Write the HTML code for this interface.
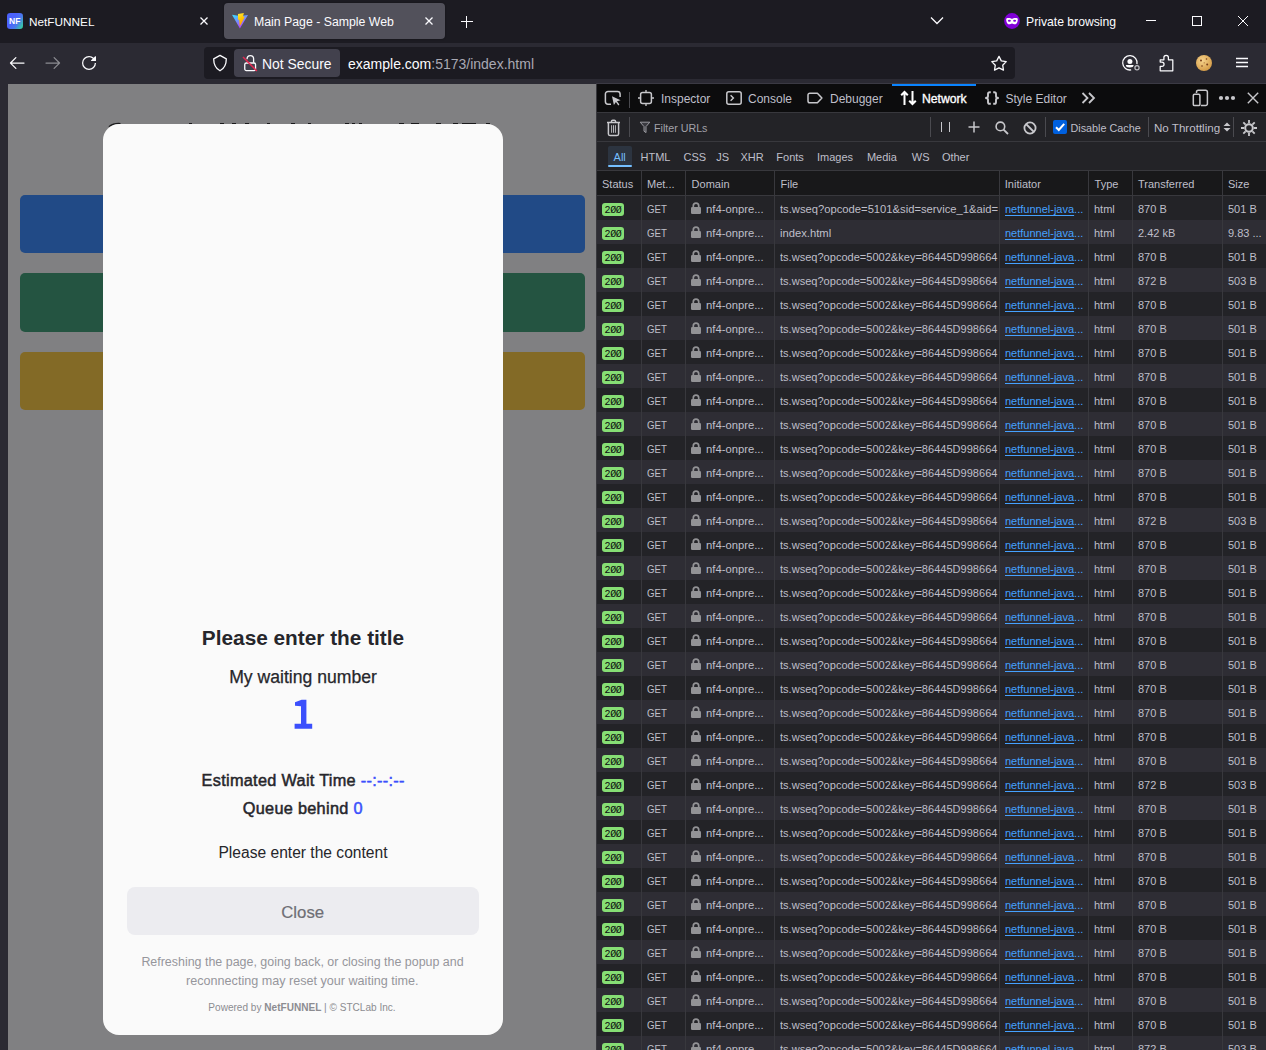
<!DOCTYPE html>
<html><head><meta charset="utf-8">
<style>
*{box-sizing:border-box;margin:0;padding:0}
html,body{width:1266px;height:1050px;overflow:hidden;background:#1c1b22;font-family:"Liberation Sans",sans-serif}
.a{position:absolute}
.t{position:absolute;white-space:nowrap}
svg{display:block}
/* tab bar */
#tabbar{position:absolute;left:0;top:0;width:1266px;height:43px;background:#1c1b22}
.tabsel{position:absolute;left:224px;top:3px;width:221px;height:36px;background:#52515b;border-radius:4px;box-shadow:0 0 2px rgba(0,0,0,.4)}
.ui{position:absolute;color:#fbfbfe;font-size:12px;white-space:nowrap;line-height:14px}
/* nav bar */
#nav{position:absolute;left:0;top:43px;width:1266px;height:41px;background:#2b2a33}
#url{position:absolute;left:204px;top:47px;width:811px;height:32px;background:#1c1b22;border-radius:4px}
#ident{position:absolute;left:234px;top:49px;width:106px;height:28px;background:#42414d;border-radius:4px}
/* page */
#leftbg{position:absolute;left:0;top:84px;width:597px;height:966px;background:#2b2a33}
#page{position:absolute;left:8px;top:84px;width:588px;height:966px;background:#808082;overflow:hidden}
.btn{position:absolute;left:12px;width:565px;height:58px;border-radius:5px}
#modal{position:absolute;left:95px;top:40px;width:400px;height:911px;background:#fafafa;border-radius:16px}
.mt1{position:absolute;left:0;width:400px;text-align:center;white-space:nowrap;color:#2b2b30}
/* devtools */
#dt{position:absolute;left:596px;top:84px;width:670px;height:966px;background:#232327;border-left:1px solid #38383d;overflow:hidden}
#dtabs{position:absolute;left:0;top:0;width:669px;height:29px;background:#0c0c0d;border-bottom:1px solid #38383d}
.dtl{position:absolute;top:7px;font-size:12px;line-height:14px;color:#bfbfc9;white-space:nowrap}
#ftb{position:absolute;left:0;top:29px;width:669px;height:29px;background:#232327;border-bottom:1px solid #38383d}
#rtb{position:absolute;left:0;top:58px;width:669px;height:29px;background:#232327;border-bottom:1px solid #38383d}
.tl{position:absolute;font-size:11px;line-height:13px;color:#bfbfc9;white-space:nowrap}
#hdr{position:absolute;left:0;top:87px;width:669px;height:25px;background:#18181a;border-bottom:1px solid #38383d}
.vl{position:absolute;width:1px;background:#38383d}
.r{position:absolute;left:0;width:669px;height:24px;background:#232327;font-size:11px;color:#bfbfc9;white-space:nowrap}
.r.alt{background:#2e2d34}
.r .c{position:absolute;top:7px;line-height:13px}
.b200{position:absolute;left:5px;top:7px;width:22px;height:13px;background:#86de74;border-radius:3px;color:#0c0c0d;font-family:"Liberation Mono",monospace;font-size:10px;line-height:13px;padding-top:1px;text-align:center;letter-spacing:-0.3px}
.mt{left:50px;transform:scaleX(0.88);transform-origin:0 0}
.lk{position:absolute;left:94px;top:6px}
.dm{left:109px;font-size:11.25px}
.fl{left:183px;font-size:11.05px;width:219px;overflow:hidden}
.ini{left:408px;color:#45a1ff}
.ini u{text-decoration:underline;text-underline-offset:2px}
.ty{left:497px}
.tr{left:541px}
.sz{left:631px}
</style></head>
<body>
<div id="tabbar">
  <!-- tab 1 -->
  <svg class="a" style="left:7px;top:13px" width="16" height="16" viewBox="0 0 16 16"><defs><linearGradient id="nfg" x1="0.35" y1="0.45" x2="1" y2="0.85"><stop offset="0" stop-color="#4b62fb"/><stop offset="0.45" stop-color="#4a78ee"/><stop offset="1" stop-color="#35d0a0"/></linearGradient></defs><rect width="16" height="16" rx="3.2" fill="url(#nfg)"/><text x="2.1" y="11" font-family="Liberation Sans" font-weight="bold" font-size="8.5" fill="#fff">NF</text></svg>
  <div class="ui" style="left:29px;top:15px;font-size:11.8px">NetFUNNEL</div>
  <svg class="a" style="left:200px;top:17px" width="8" height="8" viewBox="0 0 8 8"><path d="M0.5 0.5L7.5 7.5M7.5 0.5L0.5 7.5" stroke="#fbfbfe" stroke-width="1.3"/></svg>
  <!-- tab 2 -->
  <div class="tabsel"></div>
  <svg class="a" style="left:232px;top:13px" width="16" height="16" viewBox="0 0 16 16"><defs><linearGradient id="vg1" x1="0.1" y1="0.1" x2="0.6" y2="1"><stop offset="0" stop-color="#41d1ff"/><stop offset="1" stop-color="#bd34fe"/></linearGradient><linearGradient id="vg2" x1="0.3" y1="0" x2="0.6" y2="1"><stop offset="0" stop-color="#ffe62e"/><stop offset="0.5" stop-color="#ffc000"/><stop offset="1" stop-color="#ff9a1a"/></linearGradient></defs><path d="M0 1.7L8 2.9L16 1.9L7.9 15.6Z" fill="url(#vg1)"/><path d="M6 1L11.9 0.1L11 3.3L12.7 4.1L8.4 12.6L7.6 12.2L7.4 8.7L7.2 6.8L6 6.8Z" fill="url(#vg2)"/></svg>
  <div class="ui" style="left:254px;top:15px;font-size:12.3px">Main Page - Sample Web</div>
  <svg class="a" style="left:425px;top:17px" width="8" height="8" viewBox="0 0 8 8"><path d="M0.5 0.5L7.5 7.5M7.5 0.5L0.5 7.5" stroke="#fbfbfe" stroke-width="1.3"/></svg>
  <div class="a" style="left:466px;top:16px;width:1.2px;height:12px;background:#fbfbfe"></div><div class="a" style="left:461px;top:21px;width:12px;height:1.2px;background:#fbfbfe"></div>
  <!-- right -->
  <svg class="a" style="left:930px;top:16px" width="14" height="9" viewBox="0 0 14 9"><path d="M1 1.5L7 7.5L13 1.5" fill="none" stroke="#fbfbfe" stroke-width="1.3"/></svg>
  <svg class="a" style="left:1004px;top:12.8px" width="16" height="16" viewBox="0 0 16 16"><circle cx="8" cy="8" r="7.9" fill="#8000d7"/><path d="M2.2 6.2C2.2 5.3 3 5 4.5 5C6 5 7 5.4 8 5.9C9 5.4 10 5 11.5 5C13 5 13.8 5.3 13.8 6.2C13.8 8.5 13 11.2 11 11.2C9.6 11.2 9 10.4 8 10.4C7 10.4 6.4 11.2 5 11.2C3 11.2 2.2 8.5 2.2 6.2Z" fill="#fff"/><ellipse cx="5.4" cy="7.8" rx="1.5" ry="1.05" fill="#8000d7"/><ellipse cx="10.6" cy="7.8" rx="1.5" ry="1.05" fill="#8000d7"/></svg>
  <div class="ui" style="left:1026px;top:14.8px;font-size:12.2px">Private browsing</div>
  <div class="a" style="left:1146px;top:20px;width:10px;height:1px;background:#fbfbfe"></div>
  <div class="a" style="left:1192px;top:16px;width:10px;height:10px;border:1px solid #fbfbfe"></div>
  <svg class="a" style="left:1238px;top:16px" width="10" height="10" viewBox="0 0 10 10"><path d="M0 0L10 10M10 0L0 10" stroke="#fbfbfe" stroke-width="1"/></svg>
</div>

<div id="nav">
</div>
<svg class="a" style="left:9px;top:55px" width="16" height="16" viewBox="0 0 16 16"><path d="M15 7.375H2.976l4.337-4.337a.625.625 0 1 0-.884-.884l-5.4 5.4a.626.626 0 0 0 0 .884l5.4 5.4a.625.625 0 1 0 .884-.884L2.976 8.625H15a.625.625 0 1 0 0-1.25z" fill="#fbfbfe"/></svg>
<svg class="a" style="left:45px;top:55px" width="16" height="16" viewBox="0 0 16 16"><path d="M1 7.375h12.024L8.687 3.038a.625.625 0 1 1 .884-.884l5.4 5.4a.626.626 0 0 1 0 .884l-5.4 5.4a.625.625 0 1 1-.884-.884l4.337-4.329H1a.625.625 0 1 1 0-1.25z" fill="#8c8c92"/></svg>
<svg class="a" style="left:81px;top:55px" width="16" height="16" viewBox="0 0 16 16"><path d="M10.707 6H14.5A.5.5 0 0 0 15 5.5V1.707a.5.5 0 0 0-.854-.354L12.78 2.72A6.972 6.972 0 0 0 8 1a7 7 0 1 0 7 7h-1.25A5.75 5.75 0 1 1 8 2.25c1.437 0 2.731.539 3.742 1.396l-1.389 1.389A.5.5 0 0 0 10.707 6z" fill="#fbfbfe"/></svg>
<div id="url"></div>
<svg class="a" style="left:212px;top:54px" width="16" height="18" viewBox="0 0 16 18"><path d="M8 1.4L14.3 4.9C14.3 10 12 14.5 8 16.8C4 14.5 1.7 10 1.7 4.9Z" fill="none" stroke="#fbfbfe" stroke-width="1.3" stroke-linejoin="round"/></svg>
<div id="ident"></div>
<svg class="a" style="left:242px;top:54px" width="16" height="18" viewBox="0 0 16 18"><path d="M5.1 5.2V4.8A3.25 3.25 0 0 1 11.6 4.8V8.8" fill="none" stroke="#fbfbfe" stroke-width="1.3"/><rect x="2.75" y="9" width="10.8" height="7.6" rx="1.6" fill="none" stroke="#fbfbfe" stroke-width="1.3"/><path d="M1 3L14.9 17" stroke="#e22850" stroke-width="1.5"/></svg>
<div class="ui" style="left:262px;top:56px;font-size:13.9px;line-height:16px">Not Secure</div>
<div class="ui" style="left:348px;top:56px;font-size:14px;line-height:16px">example.com<span style="color:#a9a9b3">:5173/index.html</span></div>
<svg class="a" style="left:990px;top:55px" width="18" height="18" viewBox="0 0 18 18"><path d="M9.00 1.40L11.29 5.84L16.23 6.65L12.71 10.21L13.47 15.15L9.00 12.90L4.53 15.15L5.29 10.21L1.77 6.65L6.71 5.84Z" fill="none" stroke="#fbfbfe" stroke-width="1.3" stroke-linejoin="round"/></svg>
<svg class="a" style="left:1121px;top:54px" width="20" height="18" viewBox="0 0 20 18"><path d="M15.99 10.05A7.2 7.2 0 1 0 10.15 15.89" fill="none" stroke="#fbfbfe" stroke-width="1.3"/><circle cx="8.9" cy="7.4" r="2.5" fill="#fbfbfe"/><path d="M4.8 11.1H12.6A3.9 2.5 0 0 1 4.8 11.1Z" fill="#fbfbfe"/><circle cx="16" cy="13.7" r="2.1" fill="none" stroke="#c0c0c6" stroke-width="1.2"/></svg>
<svg class="a" style="left:1158px;top:53.5px" width="17" height="18" viewBox="0 0 17 18"><path d="M2.2 5.8H5.9V3.5A2.25 2.25 0 0 1 10.4 3.5V5.8H14.8V16.8H2.2V12.3H3.9A2.15 2.15 0 0 0 3.9 8H2.2Z" fill="none" stroke="#fbfbfe" stroke-width="1.25" stroke-linejoin="round"/></svg>
<svg class="a" style="left:1196px;top:55px" width="16" height="16" viewBox="0 0 16 16"><defs><radialGradient id="ck" cx=".4" cy=".35" r=".7"><stop offset="0" stop-color="#f6d38c"/><stop offset="1" stop-color="#d49a45"/></radialGradient></defs><circle cx="8" cy="8" r="8" fill="url(#ck)"/><circle cx="5" cy="5.5" r="1" fill="#7a3f1a"/><circle cx="10.5" cy="4" r=".8" fill="#7a3f1a"/><circle cx="11.2" cy="9.5" r="1" fill="#7a3f1a"/><circle cx="6" cy="11" r=".8" fill="#7a3f1a"/><circle cx="8.2" cy="7.8" r=".6" fill="#a66a35"/></svg>
<svg class="a" style="left:1236px;top:57px" width="12" height="11" viewBox="0 0 12 11"><path d="M0 1.5H12M0 5.5H12M0 9.5H12" stroke="#fbfbfe" stroke-width="1.3"/></svg>

<div id="leftbg"></div>
<div id="page">
  <div class="btn" style="top:111px;background:#214a86"></div>
  <div class="btn" style="top:189px;height:59px;background:#245441"></div>
  <div class="btn" style="top:268px;background:#836a26"></div>
</div>
<div class="a" style="left:188.5px;top:122.6px;width:3.5px;height:1.4px;background:#1a1a1c"></div>
<div class="a" style="left:219.7px;top:122.6px;width:4.0px;height:1.4px;background:#1a1a1c"></div>
<div class="a" style="left:232.0px;top:122.6px;width:4.3px;height:1.4px;background:#1a1a1c"></div>
<div class="a" style="left:245.0px;top:122.6px;width:4.0px;height:1.4px;background:#1a1a1c"></div>
<div class="a" style="left:266.7px;top:122.6px;width:3.6px;height:1.4px;background:#1a1a1c"></div>
<div class="a" style="left:290.8px;top:122.6px;width:4.0px;height:1.4px;background:#1a1a1c"></div>
<div class="a" style="left:307.9px;top:122.6px;width:3.6px;height:1.4px;background:#1a1a1c"></div>
<div class="a" style="left:345.0px;top:122.6px;width:4.0px;height:1.4px;background:#1a1a1c"></div>
<div class="a" style="left:351.7px;top:122.6px;width:3.6px;height:1.4px;background:#1a1a1c"></div>
<div class="a" style="left:358.8px;top:122.6px;width:3.2px;height:1.4px;background:#1a1a1c"></div>
<div class="a" style="left:399.0px;top:122.6px;width:4.5px;height:1.4px;background:#1a1a1c"></div>
<div class="a" style="left:411.0px;top:122.6px;width:8.0px;height:1.4px;background:#1a1a1c"></div>
<div class="a" style="left:436.3px;top:122.6px;width:5.2px;height:1.4px;background:#1a1a1c"></div>
<div class="a" style="left:453.3px;top:122.6px;width:4.7px;height:1.4px;background:#1a1a1c"></div>
<div class="a" style="left:462.0px;top:122.6px;width:13.8px;height:1.4px;background:#1a1a1c"></div>
<div class="a" style="left:486.0px;top:122.6px;width:4.4px;height:1.4px;background:#1a1a1c"></div>
<svg class="a" style="left:100px;top:118px" width="24" height="12" viewBox="0 0 24 12"><path d="M8.8 8.6A17 17 0 0 1 20.5 5.5" fill="none" stroke="#1a1a1c" stroke-width="1.1"/></svg>
<div class="a" style="left:103px;top:124px;width:400px;height:911px;background:#fafafa;border-radius:16px"></div>
<div class="t" style="left:3px;width:600px;text-align:center;top:627.89px;font-size:20.8px;line-height:20.8px;color:#26262b;font-weight:bold;">Please enter the title</div>
<div class="t" style="left:3px;width:600px;text-align:center;top:668.80px;font-size:17.6px;line-height:17.6px;color:#26262b;-webkit-text-stroke:0.25px #26262b;">My waiting number</div>
<svg class="a" style="left:294px;top:699px" width="19" height="31" viewBox="0 0 19 31"><path d="M1 3.2L7.6 0.8H12.4V24.8H18.2V29.8H0.6V24.8H7V7.2L1 6.8Z" fill="#3b4ffc"/></svg>
<div class="t" style="left:3.1499999999999773px;width:600px;text-align:center;top:772.40px;font-size:16.3px;line-height:16.3px;color:#26262b;letter-spacing:0.3px;-webkit-text-stroke:0.5px #26262b;">Estimated Wait Time <span style="color:#3b4ffc;-webkit-text-stroke:0.5px #3b4ffc">--:--:--</span></div>
<div class="t" style="left:2.75px;width:600px;text-align:center;top:800.40px;font-size:16.3px;line-height:16.3px;color:#26262b;letter-spacing:0.3px;-webkit-text-stroke:0.5px #26262b;">Queue behind <span style="color:#3b4ffc;-webkit-text-stroke:0.5px #3b4ffc">0</span></div>
<div class="t" style="left:3px;width:600px;text-align:center;top:845.49px;font-size:15.6px;line-height:15.6px;color:#26262b;">Please enter the content</div>
<div class="a" style="left:127px;top:887px;width:352px;height:48px;background:#ececf0;border-radius:8px"></div>
<div class="t" style="left:2.6999999999999886px;width:600px;text-align:center;top:904.78px;font-size:16.8px;line-height:16.8px;color:#6f6f75;-webkit-text-stroke:0.2px #6f6f75;">Close</div>
<div class="t" style="left:2.5px;width:600px;text-align:center;top:955.86px;font-size:12.45px;line-height:12.45px;color:#96969c;">Refreshing the page, going back, or closing the popup and</div>
<div class="t" style="left:2.3000000000000114px;width:600px;text-align:center;top:974.53px;font-size:12.6px;line-height:12.6px;color:#96969c;">reconnecting may reset your waiting time.</div>
<div class="t" style="left:2.1000000000000227px;width:600px;text-align:center;top:1001.86px;font-size:10.8px;line-height:10.8px;color:#8c8c91;transform:scaleX(0.932);">Powered by <b>NetFUNNEL</b> | © STCLab Inc.</div>

<div id="dt">
  <div id="dtabs"></div>
  <div id="ftb"></div>
  <div id="rtb"></div>
  <div id="hdr"></div>
  <div id="rows">
<div class="r" style="top:112px"><span class="b200">2ØØ</span><span class="c mt">GET</span><svg class="lk" width="10" height="12" viewBox="0 0 10 12"><path d="M2.3 5.5V3.8a2.7 2.7 0 0 1 5.4 0v1.7" fill="none" stroke="#939396" stroke-width="1.7"/><rect x="0" y="5" width="10" height="7" rx="1.2" fill="#939396"/></svg><span class="c dm">nf4-onpre...</span><span class="c fl" style="font-size:11.22px">ts.wseq?opcode=5101&amp;sid=service_1&amp;aid=</span><span class="c ini"><u>netfunnel-java</u>...</span><span class="c ty">html</span><span class="c tr">870 B</span><span class="c sz">501 B</span></div>
<div class="r alt" style="top:136px"><span class="b200">2ØØ</span><span class="c mt">GET</span><svg class="lk" width="10" height="12" viewBox="0 0 10 12"><path d="M2.3 5.5V3.8a2.7 2.7 0 0 1 5.4 0v1.7" fill="none" stroke="#939396" stroke-width="1.7"/><rect x="0" y="5" width="10" height="7" rx="1.2" fill="#939396"/></svg><span class="c dm">nf4-onpre...</span><span class="c fl" style="font-size:11.22px">index.html</span><span class="c ini"><u>netfunnel-java</u>...</span><span class="c ty">html</span><span class="c tr">2.42 kB</span><span class="c sz">9.83 ...</span></div>
<div class="r" style="top:160px"><span class="b200">2ØØ</span><span class="c mt">GET</span><svg class="lk" width="10" height="12" viewBox="0 0 10 12"><path d="M2.3 5.5V3.8a2.7 2.7 0 0 1 5.4 0v1.7" fill="none" stroke="#939396" stroke-width="1.7"/><rect x="0" y="5" width="10" height="7" rx="1.2" fill="#939396"/></svg><span class="c dm">nf4-onpre...</span><span class="c fl">ts.wseq?opcode=5002&amp;key=86445D998664</span><span class="c ini"><u>netfunnel-java</u>...</span><span class="c ty">html</span><span class="c tr">870 B</span><span class="c sz">501 B</span></div>
<div class="r alt" style="top:184px"><span class="b200">2ØØ</span><span class="c mt">GET</span><svg class="lk" width="10" height="12" viewBox="0 0 10 12"><path d="M2.3 5.5V3.8a2.7 2.7 0 0 1 5.4 0v1.7" fill="none" stroke="#939396" stroke-width="1.7"/><rect x="0" y="5" width="10" height="7" rx="1.2" fill="#939396"/></svg><span class="c dm">nf4-onpre...</span><span class="c fl">ts.wseq?opcode=5002&amp;key=86445D998664</span><span class="c ini"><u>netfunnel-java</u>...</span><span class="c ty">html</span><span class="c tr">872 B</span><span class="c sz">503 B</span></div>
<div class="r" style="top:208px"><span class="b200">2ØØ</span><span class="c mt">GET</span><svg class="lk" width="10" height="12" viewBox="0 0 10 12"><path d="M2.3 5.5V3.8a2.7 2.7 0 0 1 5.4 0v1.7" fill="none" stroke="#939396" stroke-width="1.7"/><rect x="0" y="5" width="10" height="7" rx="1.2" fill="#939396"/></svg><span class="c dm">nf4-onpre...</span><span class="c fl">ts.wseq?opcode=5002&amp;key=86445D998664</span><span class="c ini"><u>netfunnel-java</u>...</span><span class="c ty">html</span><span class="c tr">870 B</span><span class="c sz">501 B</span></div>
<div class="r alt" style="top:232px"><span class="b200">2ØØ</span><span class="c mt">GET</span><svg class="lk" width="10" height="12" viewBox="0 0 10 12"><path d="M2.3 5.5V3.8a2.7 2.7 0 0 1 5.4 0v1.7" fill="none" stroke="#939396" stroke-width="1.7"/><rect x="0" y="5" width="10" height="7" rx="1.2" fill="#939396"/></svg><span class="c dm">nf4-onpre...</span><span class="c fl">ts.wseq?opcode=5002&amp;key=86445D998664</span><span class="c ini"><u>netfunnel-java</u>...</span><span class="c ty">html</span><span class="c tr">870 B</span><span class="c sz">501 B</span></div>
<div class="r" style="top:256px"><span class="b200">2ØØ</span><span class="c mt">GET</span><svg class="lk" width="10" height="12" viewBox="0 0 10 12"><path d="M2.3 5.5V3.8a2.7 2.7 0 0 1 5.4 0v1.7" fill="none" stroke="#939396" stroke-width="1.7"/><rect x="0" y="5" width="10" height="7" rx="1.2" fill="#939396"/></svg><span class="c dm">nf4-onpre...</span><span class="c fl">ts.wseq?opcode=5002&amp;key=86445D998664</span><span class="c ini"><u>netfunnel-java</u>...</span><span class="c ty">html</span><span class="c tr">870 B</span><span class="c sz">501 B</span></div>
<div class="r alt" style="top:280px"><span class="b200">2ØØ</span><span class="c mt">GET</span><svg class="lk" width="10" height="12" viewBox="0 0 10 12"><path d="M2.3 5.5V3.8a2.7 2.7 0 0 1 5.4 0v1.7" fill="none" stroke="#939396" stroke-width="1.7"/><rect x="0" y="5" width="10" height="7" rx="1.2" fill="#939396"/></svg><span class="c dm">nf4-onpre...</span><span class="c fl">ts.wseq?opcode=5002&amp;key=86445D998664</span><span class="c ini"><u>netfunnel-java</u>...</span><span class="c ty">html</span><span class="c tr">870 B</span><span class="c sz">501 B</span></div>
<div class="r" style="top:304px"><span class="b200">2ØØ</span><span class="c mt">GET</span><svg class="lk" width="10" height="12" viewBox="0 0 10 12"><path d="M2.3 5.5V3.8a2.7 2.7 0 0 1 5.4 0v1.7" fill="none" stroke="#939396" stroke-width="1.7"/><rect x="0" y="5" width="10" height="7" rx="1.2" fill="#939396"/></svg><span class="c dm">nf4-onpre...</span><span class="c fl">ts.wseq?opcode=5002&amp;key=86445D998664</span><span class="c ini"><u>netfunnel-java</u>...</span><span class="c ty">html</span><span class="c tr">870 B</span><span class="c sz">501 B</span></div>
<div class="r alt" style="top:328px"><span class="b200">2ØØ</span><span class="c mt">GET</span><svg class="lk" width="10" height="12" viewBox="0 0 10 12"><path d="M2.3 5.5V3.8a2.7 2.7 0 0 1 5.4 0v1.7" fill="none" stroke="#939396" stroke-width="1.7"/><rect x="0" y="5" width="10" height="7" rx="1.2" fill="#939396"/></svg><span class="c dm">nf4-onpre...</span><span class="c fl">ts.wseq?opcode=5002&amp;key=86445D998664</span><span class="c ini"><u>netfunnel-java</u>...</span><span class="c ty">html</span><span class="c tr">870 B</span><span class="c sz">501 B</span></div>
<div class="r" style="top:352px"><span class="b200">2ØØ</span><span class="c mt">GET</span><svg class="lk" width="10" height="12" viewBox="0 0 10 12"><path d="M2.3 5.5V3.8a2.7 2.7 0 0 1 5.4 0v1.7" fill="none" stroke="#939396" stroke-width="1.7"/><rect x="0" y="5" width="10" height="7" rx="1.2" fill="#939396"/></svg><span class="c dm">nf4-onpre...</span><span class="c fl">ts.wseq?opcode=5002&amp;key=86445D998664</span><span class="c ini"><u>netfunnel-java</u>...</span><span class="c ty">html</span><span class="c tr">870 B</span><span class="c sz">501 B</span></div>
<div class="r alt" style="top:376px"><span class="b200">2ØØ</span><span class="c mt">GET</span><svg class="lk" width="10" height="12" viewBox="0 0 10 12"><path d="M2.3 5.5V3.8a2.7 2.7 0 0 1 5.4 0v1.7" fill="none" stroke="#939396" stroke-width="1.7"/><rect x="0" y="5" width="10" height="7" rx="1.2" fill="#939396"/></svg><span class="c dm">nf4-onpre...</span><span class="c fl">ts.wseq?opcode=5002&amp;key=86445D998664</span><span class="c ini"><u>netfunnel-java</u>...</span><span class="c ty">html</span><span class="c tr">870 B</span><span class="c sz">501 B</span></div>
<div class="r" style="top:400px"><span class="b200">2ØØ</span><span class="c mt">GET</span><svg class="lk" width="10" height="12" viewBox="0 0 10 12"><path d="M2.3 5.5V3.8a2.7 2.7 0 0 1 5.4 0v1.7" fill="none" stroke="#939396" stroke-width="1.7"/><rect x="0" y="5" width="10" height="7" rx="1.2" fill="#939396"/></svg><span class="c dm">nf4-onpre...</span><span class="c fl">ts.wseq?opcode=5002&amp;key=86445D998664</span><span class="c ini"><u>netfunnel-java</u>...</span><span class="c ty">html</span><span class="c tr">870 B</span><span class="c sz">501 B</span></div>
<div class="r alt" style="top:424px"><span class="b200">2ØØ</span><span class="c mt">GET</span><svg class="lk" width="10" height="12" viewBox="0 0 10 12"><path d="M2.3 5.5V3.8a2.7 2.7 0 0 1 5.4 0v1.7" fill="none" stroke="#939396" stroke-width="1.7"/><rect x="0" y="5" width="10" height="7" rx="1.2" fill="#939396"/></svg><span class="c dm">nf4-onpre...</span><span class="c fl">ts.wseq?opcode=5002&amp;key=86445D998664</span><span class="c ini"><u>netfunnel-java</u>...</span><span class="c ty">html</span><span class="c tr">872 B</span><span class="c sz">503 B</span></div>
<div class="r" style="top:448px"><span class="b200">2ØØ</span><span class="c mt">GET</span><svg class="lk" width="10" height="12" viewBox="0 0 10 12"><path d="M2.3 5.5V3.8a2.7 2.7 0 0 1 5.4 0v1.7" fill="none" stroke="#939396" stroke-width="1.7"/><rect x="0" y="5" width="10" height="7" rx="1.2" fill="#939396"/></svg><span class="c dm">nf4-onpre...</span><span class="c fl">ts.wseq?opcode=5002&amp;key=86445D998664</span><span class="c ini"><u>netfunnel-java</u>...</span><span class="c ty">html</span><span class="c tr">870 B</span><span class="c sz">501 B</span></div>
<div class="r alt" style="top:472px"><span class="b200">2ØØ</span><span class="c mt">GET</span><svg class="lk" width="10" height="12" viewBox="0 0 10 12"><path d="M2.3 5.5V3.8a2.7 2.7 0 0 1 5.4 0v1.7" fill="none" stroke="#939396" stroke-width="1.7"/><rect x="0" y="5" width="10" height="7" rx="1.2" fill="#939396"/></svg><span class="c dm">nf4-onpre...</span><span class="c fl">ts.wseq?opcode=5002&amp;key=86445D998664</span><span class="c ini"><u>netfunnel-java</u>...</span><span class="c ty">html</span><span class="c tr">870 B</span><span class="c sz">501 B</span></div>
<div class="r" style="top:496px"><span class="b200">2ØØ</span><span class="c mt">GET</span><svg class="lk" width="10" height="12" viewBox="0 0 10 12"><path d="M2.3 5.5V3.8a2.7 2.7 0 0 1 5.4 0v1.7" fill="none" stroke="#939396" stroke-width="1.7"/><rect x="0" y="5" width="10" height="7" rx="1.2" fill="#939396"/></svg><span class="c dm">nf4-onpre...</span><span class="c fl">ts.wseq?opcode=5002&amp;key=86445D998664</span><span class="c ini"><u>netfunnel-java</u>...</span><span class="c ty">html</span><span class="c tr">870 B</span><span class="c sz">501 B</span></div>
<div class="r alt" style="top:520px"><span class="b200">2ØØ</span><span class="c mt">GET</span><svg class="lk" width="10" height="12" viewBox="0 0 10 12"><path d="M2.3 5.5V3.8a2.7 2.7 0 0 1 5.4 0v1.7" fill="none" stroke="#939396" stroke-width="1.7"/><rect x="0" y="5" width="10" height="7" rx="1.2" fill="#939396"/></svg><span class="c dm">nf4-onpre...</span><span class="c fl">ts.wseq?opcode=5002&amp;key=86445D998664</span><span class="c ini"><u>netfunnel-java</u>...</span><span class="c ty">html</span><span class="c tr">870 B</span><span class="c sz">501 B</span></div>
<div class="r" style="top:544px"><span class="b200">2ØØ</span><span class="c mt">GET</span><svg class="lk" width="10" height="12" viewBox="0 0 10 12"><path d="M2.3 5.5V3.8a2.7 2.7 0 0 1 5.4 0v1.7" fill="none" stroke="#939396" stroke-width="1.7"/><rect x="0" y="5" width="10" height="7" rx="1.2" fill="#939396"/></svg><span class="c dm">nf4-onpre...</span><span class="c fl">ts.wseq?opcode=5002&amp;key=86445D998664</span><span class="c ini"><u>netfunnel-java</u>...</span><span class="c ty">html</span><span class="c tr">870 B</span><span class="c sz">501 B</span></div>
<div class="r alt" style="top:568px"><span class="b200">2ØØ</span><span class="c mt">GET</span><svg class="lk" width="10" height="12" viewBox="0 0 10 12"><path d="M2.3 5.5V3.8a2.7 2.7 0 0 1 5.4 0v1.7" fill="none" stroke="#939396" stroke-width="1.7"/><rect x="0" y="5" width="10" height="7" rx="1.2" fill="#939396"/></svg><span class="c dm">nf4-onpre...</span><span class="c fl">ts.wseq?opcode=5002&amp;key=86445D998664</span><span class="c ini"><u>netfunnel-java</u>...</span><span class="c ty">html</span><span class="c tr">870 B</span><span class="c sz">501 B</span></div>
<div class="r" style="top:592px"><span class="b200">2ØØ</span><span class="c mt">GET</span><svg class="lk" width="10" height="12" viewBox="0 0 10 12"><path d="M2.3 5.5V3.8a2.7 2.7 0 0 1 5.4 0v1.7" fill="none" stroke="#939396" stroke-width="1.7"/><rect x="0" y="5" width="10" height="7" rx="1.2" fill="#939396"/></svg><span class="c dm">nf4-onpre...</span><span class="c fl">ts.wseq?opcode=5002&amp;key=86445D998664</span><span class="c ini"><u>netfunnel-java</u>...</span><span class="c ty">html</span><span class="c tr">870 B</span><span class="c sz">501 B</span></div>
<div class="r alt" style="top:616px"><span class="b200">2ØØ</span><span class="c mt">GET</span><svg class="lk" width="10" height="12" viewBox="0 0 10 12"><path d="M2.3 5.5V3.8a2.7 2.7 0 0 1 5.4 0v1.7" fill="none" stroke="#939396" stroke-width="1.7"/><rect x="0" y="5" width="10" height="7" rx="1.2" fill="#939396"/></svg><span class="c dm">nf4-onpre...</span><span class="c fl">ts.wseq?opcode=5002&amp;key=86445D998664</span><span class="c ini"><u>netfunnel-java</u>...</span><span class="c ty">html</span><span class="c tr">870 B</span><span class="c sz">501 B</span></div>
<div class="r" style="top:640px"><span class="b200">2ØØ</span><span class="c mt">GET</span><svg class="lk" width="10" height="12" viewBox="0 0 10 12"><path d="M2.3 5.5V3.8a2.7 2.7 0 0 1 5.4 0v1.7" fill="none" stroke="#939396" stroke-width="1.7"/><rect x="0" y="5" width="10" height="7" rx="1.2" fill="#939396"/></svg><span class="c dm">nf4-onpre...</span><span class="c fl">ts.wseq?opcode=5002&amp;key=86445D998664</span><span class="c ini"><u>netfunnel-java</u>...</span><span class="c ty">html</span><span class="c tr">870 B</span><span class="c sz">501 B</span></div>
<div class="r alt" style="top:664px"><span class="b200">2ØØ</span><span class="c mt">GET</span><svg class="lk" width="10" height="12" viewBox="0 0 10 12"><path d="M2.3 5.5V3.8a2.7 2.7 0 0 1 5.4 0v1.7" fill="none" stroke="#939396" stroke-width="1.7"/><rect x="0" y="5" width="10" height="7" rx="1.2" fill="#939396"/></svg><span class="c dm">nf4-onpre...</span><span class="c fl">ts.wseq?opcode=5002&amp;key=86445D998664</span><span class="c ini"><u>netfunnel-java</u>...</span><span class="c ty">html</span><span class="c tr">870 B</span><span class="c sz">501 B</span></div>
<div class="r" style="top:688px"><span class="b200">2ØØ</span><span class="c mt">GET</span><svg class="lk" width="10" height="12" viewBox="0 0 10 12"><path d="M2.3 5.5V3.8a2.7 2.7 0 0 1 5.4 0v1.7" fill="none" stroke="#939396" stroke-width="1.7"/><rect x="0" y="5" width="10" height="7" rx="1.2" fill="#939396"/></svg><span class="c dm">nf4-onpre...</span><span class="c fl">ts.wseq?opcode=5002&amp;key=86445D998664</span><span class="c ini"><u>netfunnel-java</u>...</span><span class="c ty">html</span><span class="c tr">872 B</span><span class="c sz">503 B</span></div>
<div class="r alt" style="top:712px"><span class="b200">2ØØ</span><span class="c mt">GET</span><svg class="lk" width="10" height="12" viewBox="0 0 10 12"><path d="M2.3 5.5V3.8a2.7 2.7 0 0 1 5.4 0v1.7" fill="none" stroke="#939396" stroke-width="1.7"/><rect x="0" y="5" width="10" height="7" rx="1.2" fill="#939396"/></svg><span class="c dm">nf4-onpre...</span><span class="c fl">ts.wseq?opcode=5002&amp;key=86445D998664</span><span class="c ini"><u>netfunnel-java</u>...</span><span class="c ty">html</span><span class="c tr">870 B</span><span class="c sz">501 B</span></div>
<div class="r" style="top:736px"><span class="b200">2ØØ</span><span class="c mt">GET</span><svg class="lk" width="10" height="12" viewBox="0 0 10 12"><path d="M2.3 5.5V3.8a2.7 2.7 0 0 1 5.4 0v1.7" fill="none" stroke="#939396" stroke-width="1.7"/><rect x="0" y="5" width="10" height="7" rx="1.2" fill="#939396"/></svg><span class="c dm">nf4-onpre...</span><span class="c fl">ts.wseq?opcode=5002&amp;key=86445D998664</span><span class="c ini"><u>netfunnel-java</u>...</span><span class="c ty">html</span><span class="c tr">870 B</span><span class="c sz">501 B</span></div>
<div class="r alt" style="top:760px"><span class="b200">2ØØ</span><span class="c mt">GET</span><svg class="lk" width="10" height="12" viewBox="0 0 10 12"><path d="M2.3 5.5V3.8a2.7 2.7 0 0 1 5.4 0v1.7" fill="none" stroke="#939396" stroke-width="1.7"/><rect x="0" y="5" width="10" height="7" rx="1.2" fill="#939396"/></svg><span class="c dm">nf4-onpre...</span><span class="c fl">ts.wseq?opcode=5002&amp;key=86445D998664</span><span class="c ini"><u>netfunnel-java</u>...</span><span class="c ty">html</span><span class="c tr">870 B</span><span class="c sz">501 B</span></div>
<div class="r" style="top:784px"><span class="b200">2ØØ</span><span class="c mt">GET</span><svg class="lk" width="10" height="12" viewBox="0 0 10 12"><path d="M2.3 5.5V3.8a2.7 2.7 0 0 1 5.4 0v1.7" fill="none" stroke="#939396" stroke-width="1.7"/><rect x="0" y="5" width="10" height="7" rx="1.2" fill="#939396"/></svg><span class="c dm">nf4-onpre...</span><span class="c fl">ts.wseq?opcode=5002&amp;key=86445D998664</span><span class="c ini"><u>netfunnel-java</u>...</span><span class="c ty">html</span><span class="c tr">870 B</span><span class="c sz">501 B</span></div>
<div class="r alt" style="top:808px"><span class="b200">2ØØ</span><span class="c mt">GET</span><svg class="lk" width="10" height="12" viewBox="0 0 10 12"><path d="M2.3 5.5V3.8a2.7 2.7 0 0 1 5.4 0v1.7" fill="none" stroke="#939396" stroke-width="1.7"/><rect x="0" y="5" width="10" height="7" rx="1.2" fill="#939396"/></svg><span class="c dm">nf4-onpre...</span><span class="c fl">ts.wseq?opcode=5002&amp;key=86445D998664</span><span class="c ini"><u>netfunnel-java</u>...</span><span class="c ty">html</span><span class="c tr">870 B</span><span class="c sz">501 B</span></div>
<div class="r" style="top:832px"><span class="b200">2ØØ</span><span class="c mt">GET</span><svg class="lk" width="10" height="12" viewBox="0 0 10 12"><path d="M2.3 5.5V3.8a2.7 2.7 0 0 1 5.4 0v1.7" fill="none" stroke="#939396" stroke-width="1.7"/><rect x="0" y="5" width="10" height="7" rx="1.2" fill="#939396"/></svg><span class="c dm">nf4-onpre...</span><span class="c fl">ts.wseq?opcode=5002&amp;key=86445D998664</span><span class="c ini"><u>netfunnel-java</u>...</span><span class="c ty">html</span><span class="c tr">870 B</span><span class="c sz">501 B</span></div>
<div class="r alt" style="top:856px"><span class="b200">2ØØ</span><span class="c mt">GET</span><svg class="lk" width="10" height="12" viewBox="0 0 10 12"><path d="M2.3 5.5V3.8a2.7 2.7 0 0 1 5.4 0v1.7" fill="none" stroke="#939396" stroke-width="1.7"/><rect x="0" y="5" width="10" height="7" rx="1.2" fill="#939396"/></svg><span class="c dm">nf4-onpre...</span><span class="c fl">ts.wseq?opcode=5002&amp;key=86445D998664</span><span class="c ini"><u>netfunnel-java</u>...</span><span class="c ty">html</span><span class="c tr">870 B</span><span class="c sz">501 B</span></div>
<div class="r" style="top:880px"><span class="b200">2ØØ</span><span class="c mt">GET</span><svg class="lk" width="10" height="12" viewBox="0 0 10 12"><path d="M2.3 5.5V3.8a2.7 2.7 0 0 1 5.4 0v1.7" fill="none" stroke="#939396" stroke-width="1.7"/><rect x="0" y="5" width="10" height="7" rx="1.2" fill="#939396"/></svg><span class="c dm">nf4-onpre...</span><span class="c fl">ts.wseq?opcode=5002&amp;key=86445D998664</span><span class="c ini"><u>netfunnel-java</u>...</span><span class="c ty">html</span><span class="c tr">870 B</span><span class="c sz">501 B</span></div>
<div class="r alt" style="top:904px"><span class="b200">2ØØ</span><span class="c mt">GET</span><svg class="lk" width="10" height="12" viewBox="0 0 10 12"><path d="M2.3 5.5V3.8a2.7 2.7 0 0 1 5.4 0v1.7" fill="none" stroke="#939396" stroke-width="1.7"/><rect x="0" y="5" width="10" height="7" rx="1.2" fill="#939396"/></svg><span class="c dm">nf4-onpre...</span><span class="c fl">ts.wseq?opcode=5002&amp;key=86445D998664</span><span class="c ini"><u>netfunnel-java</u>...</span><span class="c ty">html</span><span class="c tr">870 B</span><span class="c sz">501 B</span></div>
<div class="r" style="top:928px"><span class="b200">2ØØ</span><span class="c mt">GET</span><svg class="lk" width="10" height="12" viewBox="0 0 10 12"><path d="M2.3 5.5V3.8a2.7 2.7 0 0 1 5.4 0v1.7" fill="none" stroke="#939396" stroke-width="1.7"/><rect x="0" y="5" width="10" height="7" rx="1.2" fill="#939396"/></svg><span class="c dm">nf4-onpre...</span><span class="c fl">ts.wseq?opcode=5002&amp;key=86445D998664</span><span class="c ini"><u>netfunnel-java</u>...</span><span class="c ty">html</span><span class="c tr">870 B</span><span class="c sz">501 B</span></div>
<div class="r alt" style="top:952px"><span class="b200">2ØØ</span><span class="c mt">GET</span><svg class="lk" width="10" height="12" viewBox="0 0 10 12"><path d="M2.3 5.5V3.8a2.7 2.7 0 0 1 5.4 0v1.7" fill="none" stroke="#939396" stroke-width="1.7"/><rect x="0" y="5" width="10" height="7" rx="1.2" fill="#939396"/></svg><span class="c dm">nf4-onpre...</span><span class="c fl">ts.wseq?opcode=5002&amp;key=86445D998664</span><span class="c ini"><u>netfunnel-java</u>...</span><span class="c ty">html</span><span class="c tr">872 B</span><span class="c sz">503 B</span></div>
  </div>
</div>
<div class="a" style="left:596px;top:83px;width:670px;height:1px;background:#3b3a44"></div>
<div class="a" style="left:892px;top:84px;width:84px;height:2px;background:#0a84ff"></div>
<div class="vl" style="left:641px;top:171px;height:879px"></div>
<div class="vl" style="left:685px;top:171px;height:879px"></div>
<div class="vl" style="left:774px;top:171px;height:879px"></div>
<div class="vl" style="left:999px;top:171px;height:879px"></div>
<div class="vl" style="left:1088px;top:171px;height:879px"></div>
<div class="vl" style="left:1132px;top:171px;height:879px"></div>
<div class="vl" style="left:1222px;top:171px;height:879px"></div>
<!-- devtools tab icons -->
<svg class="a" style="left:604px;top:90px" width="18" height="16" viewBox="0 0 18 16"><path d="M7 14.2H4A2.6 2.6 0 0 1 1.4 11.6V4A2.6 2.6 0 0 1 4 1.4H13.5A2.6 2.6 0 0 1 16.1 4V7" fill="none" stroke="#c8c8cc" stroke-width="1.5"/><path d="M8 6.2L16.6 10.2L13 11.2L15.4 14.6L14.3 15.4L11.9 12.1L9.9 15Z" fill="#c8c8cc"/></svg>
<div class="vl" style="left:629px;top:92px;height:16px;background:#4a4a4f"></div>
<svg class="a" style="left:638px;top:90px" width="16" height="16" viewBox="0 0 16 16"><rect x="2.6" y="2.6" width="10.8" height="10.8" rx="2" fill="none" stroke="#c8c8cc" stroke-width="1.5"/><path d="M8 0V2.6M8 13.4V16M0 8H2.6M13.4 8H16" stroke="#c8c8cc" stroke-width="1.3"/></svg>
<svg class="a" style="left:726px;top:90px" width="16" height="16" viewBox="0 0 16 16"><rect x="0.8" y="1.8" width="14.4" height="12.4" rx="2" fill="none" stroke="#c8c8cc" stroke-width="1.5"/><path d="M4.6 5.2L7.4 8L4.6 10.8" fill="none" stroke="#c8c8cc" stroke-width="1.4"/></svg>
<svg class="a" style="left:807px;top:90px" width="16" height="16" viewBox="0 0 16 16"><path d="M2.8 3.2H10.4L14.9 8L10.4 12.8H2.8A1.8 1.8 0 0 1 1 11V5A1.8 1.8 0 0 1 2.8 3.2Z" fill="none" stroke="#c8c8cc" stroke-width="1.5" stroke-linejoin="round"/></svg>
<svg class="a" style="left:899.8px;top:90px" width="17" height="16" viewBox="0 0 17 16"><path d="M4.5 15V2M1.2 5.3L4.5 2L7.8 5.3M12.5 1V14M9.2 10.7L12.5 14L15.8 10.7" fill="none" stroke="#ffffff" stroke-width="2"/></svg>
<svg class="a" style="left:984px;top:90px" width="16" height="16" viewBox="0 0 16 16"><path d="M6.8 2.2H5.8C4.6 2.2 4 2.8 4 3.8V6.3C4 7.3 3.2 8 1.2 8C3.2 8 4 8.7 4 9.7V12.2C4 13.2 4.6 13.8 5.8 13.8H6.8M9.2 2.2H10.2C11.4 2.2 12 2.8 12 3.8V6.3C12 7.3 12.8 8 14.8 8C12.8 8 12 8.7 12 9.7V12.2C12 13.2 11.4 13.8 10.2 13.8H9.2" fill="none" stroke="#c8c8cc" stroke-width="1.9"/></svg>
<svg class="a" style="left:1081px;top:92px" width="15" height="12" viewBox="0 0 15 12"><path d="M1.5 1L6.5 6L1.5 11M8 1L13 6L8 11" fill="none" stroke="#c8c8cc" stroke-width="1.8"/></svg>
<svg class="a" style="left:1192px;top:89px" width="17" height="18" viewBox="0 0 17 18"><path d="M4.5 4V3A1.8 1.8 0 0 1 6.3 1.2H13.6A1.8 1.8 0 0 1 15.4 3V14.8A1.8 1.8 0 0 1 13.6 16.6H9" fill="none" stroke="#c8c8cc" stroke-width="1.5"/><rect x="1.3" y="5.2" width="6.6" height="11.4" rx="1.2" fill="none" stroke="#c8c8cc" stroke-width="1.5"/></svg>
<svg class="a" style="left:1218px;top:95px" width="18" height="6" viewBox="0 0 18 6"><circle cx="3" cy="3" r="2.1" fill="#c8c8cc"/><circle cx="9" cy="3" r="2.1" fill="#c8c8cc"/><circle cx="15" cy="3" r="2.1" fill="#c8c8cc"/></svg>
<svg class="a" style="left:1247px;top:92px" width="12" height="12" viewBox="0 0 12 12"><path d="M0.8 0.8L11.2 11.2M11.2 0.8L0.8 11.2" stroke="#c8c8cc" stroke-width="1.4"/></svg>
<!-- filter toolbar icons -->
<svg class="a" style="left:606px;top:119px" width="15" height="18" viewBox="0 0 15 18"><path d="M1 3.5H14M5.4 3.3V2.4A1.3 1.3 0 0 1 6.7 1.2H8.3A1.3 1.3 0 0 1 9.6 2.4V3.3" fill="none" stroke="#c8c8cc" stroke-width="1.4"/><path d="M2.4 4V15A1.8 1.8 0 0 0 4.2 16.6H10.8A1.8 1.8 0 0 0 12.6 15V4" fill="none" stroke="#c8c8cc" stroke-width="1.5"/><path d="M5.6 6.2V13.8M7.5 6.2V13.8M9.4 6.2V13.8" stroke="#c8c8cc" stroke-width="0.9"/></svg>
<div class="vl" style="left:629px;top:117px;height:20px;background:#4a4a4f"></div>
<svg class="a" style="left:639px;top:121px" width="12" height="13" viewBox="0 0 12 13"><path d="M1.2 1.2H10.8L7 5.6V11.6L5 10.2V5.6Z" fill="#3a3a40" stroke="#9a9aa0" stroke-width="1" stroke-linejoin="round"/></svg>
<div class="vl" style="left:930px;top:117px;height:20px;background:#4a4a4f"></div>
<div class="a" style="left:941px;top:122px;width:1.4px;height:10px;background:#c8c8cc"></div>
<div class="a" style="left:949px;top:122px;width:1.4px;height:10px;background:#c8c8cc"></div>
<svg class="a" style="left:968px;top:121px" width="12" height="12" viewBox="0 0 12 12"><path d="M6 0.5V11.5M0.5 6H11.5" stroke="#c8c8cc" stroke-width="1.5"/></svg>
<svg class="a" style="left:995px;top:121px" width="14" height="14" viewBox="0 0 14 14"><circle cx="5.4" cy="5.4" r="4.3" fill="none" stroke="#c8c8cc" stroke-width="1.6"/><path d="M8.6 8.6L13 13" stroke="#c8c8cc" stroke-width="1.8"/></svg>
<svg class="a" style="left:1023px;top:121px" width="14" height="14" viewBox="0 0 14 14"><circle cx="7" cy="7" r="5.6" fill="none" stroke="#c8c8cc" stroke-width="1.8"/><path d="M3 3L11 11" stroke="#c8c8cc" stroke-width="1.8"/></svg>
<div class="vl" style="left:1045px;top:117px;height:20px;background:#4a4a4f"></div>
<svg class="a" style="left:1053px;top:120px" width="14" height="14" viewBox="0 0 14 14"><rect width="14" height="14" rx="2" fill="#0060df"/><path d="M3 7.2L5.8 10L11.2 3.8" fill="none" stroke="#fff" stroke-width="2"/></svg>
<div class="vl" style="left:1148px;top:117px;height:20px;background:#4a4a4f"></div>
<svg class="a" style="left:1223px;top:122px" width="8" height="10" viewBox="0 0 8 10"><path d="M4 0.5L7.5 4H0.5Z M4 9.5L7.5 6H0.5Z" fill="#c8c8cc"/></svg>
<div class="vl" style="left:1233px;top:117px;height:20px;background:#4a4a4f"></div>
<svg class="a" style="left:1240px;top:119px" width="18" height="18" viewBox="0 0 18 18"><circle cx="9" cy="9" r="3.8" fill="none" stroke="#c8c8cc" stroke-width="2"/><path d="M9 1V4.2M9 13.8V17M1 9H4.2M13.8 9H17M3.3 3.3L5.6 5.6M12.4 12.4L14.7 14.7M14.7 3.3L12.4 5.6M5.6 12.4L3.3 14.7" stroke="#c8c8cc" stroke-width="1.8"/></svg>
<!-- request type selected -->
<div class="a" style="left:608px;top:146px;width:24px;height:21px;background:#2c3440;border-radius:2px"></div>
<div class="a" style="left:608px;top:165px;width:24px;height:2px;background:#75bfff;border-radius:1px"></div>
<div class="t" style="left:661px;top:92.84px;font-size:12px;line-height:12px;color:#bfbfc9;">Inspector</div>
<div class="t" style="left:748px;top:92.84px;font-size:12px;line-height:12px;color:#bfbfc9;">Console</div>
<div class="t" style="left:830px;top:92.84px;font-size:12px;line-height:12px;color:#bfbfc9;">Debugger</div>
<div class="t" style="left:1005.5px;top:92.84px;font-size:12px;line-height:12px;color:#bfbfc9;">Style Editor</div>
<div class="t" style="left:922px;top:92.67px;font-size:12.2px;line-height:12.2px;color:#ffffff;-webkit-text-stroke:0.35px #fff;">Network</div>
<div class="t" style="left:654px;top:122.94px;font-size:10.7px;line-height:10.7px;color:#a2a2aa;">Filter URLs</div>
<div class="t" style="left:1070.5px;top:122.86px;font-size:10.8px;line-height:10.8px;color:#bfbfc9;">Disable Cache</div>
<div class="t" style="left:1154px;top:122.18px;font-size:11.6px;line-height:11.6px;color:#bfbfc9;">No Throttling</div>
<div class="t" style="left:613.6px;top:151.69px;font-size:11px;line-height:11px;color:#75bfff;">All</div>
<div class="t" style="left:640.5px;top:151.69px;font-size:11px;line-height:11px;color:#bfbfc9;">HTML</div>
<div class="t" style="left:683.5px;top:151.69px;font-size:11px;line-height:11px;color:#bfbfc9;">CSS</div>
<div class="t" style="left:716.3px;top:151.69px;font-size:11px;line-height:11px;color:#bfbfc9;">JS</div>
<div class="t" style="left:740.5px;top:151.69px;font-size:11px;line-height:11px;color:#bfbfc9;">XHR</div>
<div class="t" style="left:776.3px;top:151.69px;font-size:11px;line-height:11px;color:#bfbfc9;">Fonts</div>
<div class="t" style="left:817px;top:151.69px;font-size:11px;line-height:11px;color:#bfbfc9;">Images</div>
<div class="t" style="left:866.9px;top:151.69px;font-size:11px;line-height:11px;color:#bfbfc9;">Media</div>
<div class="t" style="left:911.8px;top:151.69px;font-size:11px;line-height:11px;color:#bfbfc9;">WS</div>
<div class="t" style="left:941.9px;top:151.69px;font-size:11px;line-height:11px;color:#bfbfc9;">Other</div>
<div class="t" style="left:602px;top:178.69px;font-size:11px;line-height:11px;color:#bfbfc9;">Status</div>
<div class="t" style="left:647px;top:178.69px;font-size:11px;line-height:11px;color:#bfbfc9;">Met...</div>
<div class="t" style="left:691.6px;top:178.69px;font-size:11px;line-height:11px;color:#bfbfc9;">Domain</div>
<div class="t" style="left:780.5px;top:178.69px;font-size:11px;line-height:11px;color:#bfbfc9;">File</div>
<div class="t" style="left:1004.8px;top:178.69px;font-size:11px;line-height:11px;color:#bfbfc9;">Initiator</div>
<div class="t" style="left:1094.6px;top:178.69px;font-size:11px;line-height:11px;color:#bfbfc9;">Type</div>
<div class="t" style="left:1138px;top:178.69px;font-size:11px;line-height:11px;color:#bfbfc9;">Transferred</div>
<div class="t" style="left:1228px;top:178.69px;font-size:11px;line-height:11px;color:#bfbfc9;">Size</div>
</body></html>
